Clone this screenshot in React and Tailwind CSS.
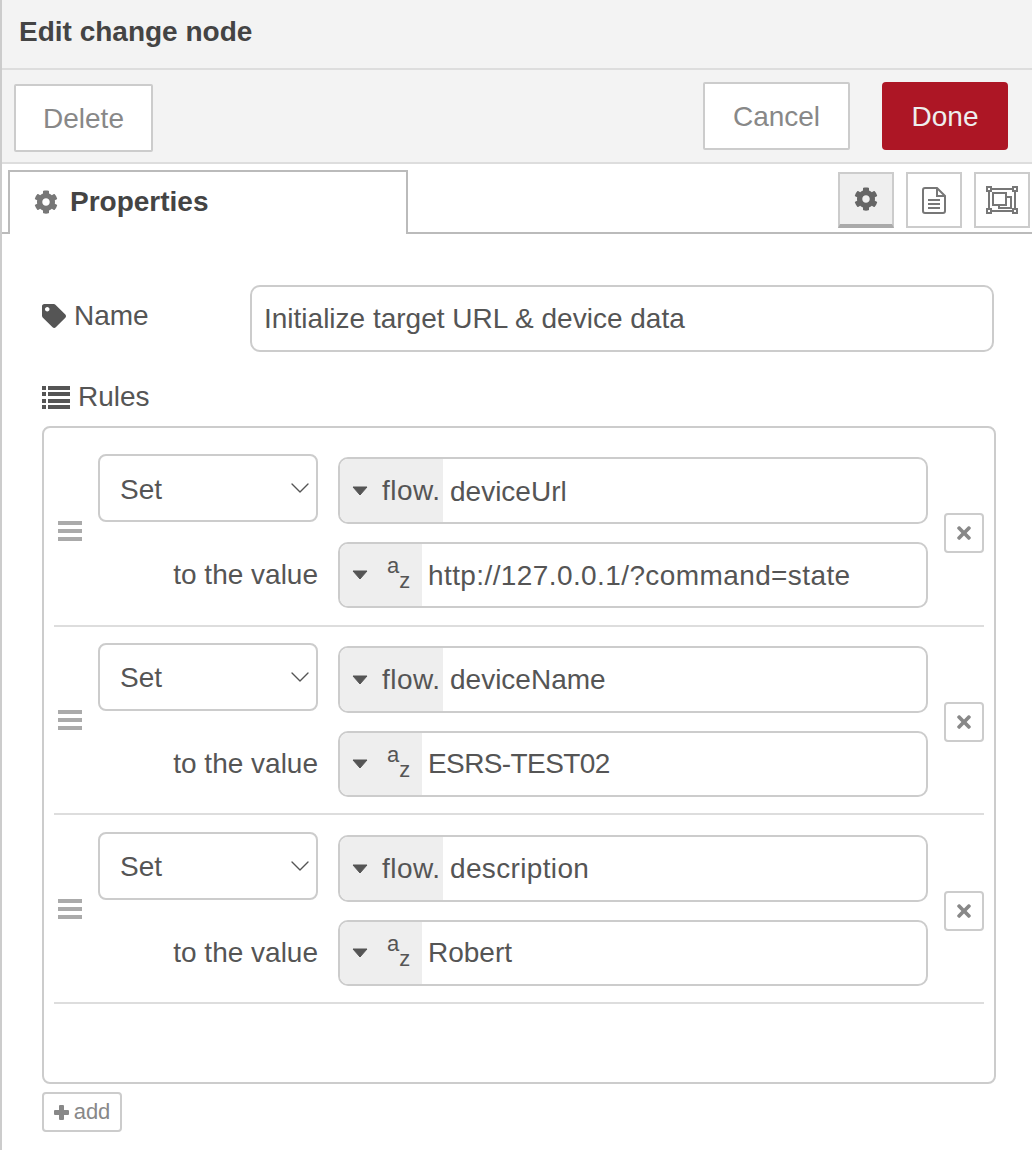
import React from 'react';
import { ChevronDown } from 'lucide-react';
import { FaCog, FaTag, FaTimes } from 'react-icons/fa';

const rules = [
  { target: 'deviceUrl', value: 'http://127.0.0.1/?command=state', pad: 'pt-[16px]', h: 'h-[189px]', setCls: 'pt-[3px]', targetCls: 'pt-[2px]', valueCls: 'pt-[2px] tracking-[0.4px]' },
  { target: 'deviceName', value: 'ESRS-TEST02', pad: 'pt-[16px]', h: 'h-[188px]', setCls: 'pt-[1px]', targetCls: '', valueCls: 'tracking-[-0.6px]' },
  { target: 'description', value: 'Robert', pad: 'pt-[17px]', h: 'h-[189px]', setCls: 'pt-[1px]', targetCls: 'tracking-[0.35px]', valueCls: '' },
];

function Caret() {
  return (
    <svg width="16" height="10" viewBox="0 0 16 10" className="shrink-0">
      <path d="M1 1h14L8 9z" fill="#555" stroke="#555" strokeLinejoin="round" />
    </svg>
  );
}

function ListIcon() {
  return (
    <svg width="28" height="23" viewBox="0 0 28 23" fill="#555" className="shrink-0">
      <rect x="0" y="0" width="4" height="4" />
      <rect x="6" y="0" width="22" height="4" />
      <rect x="0" y="6" width="4" height="4" />
      <rect x="6" y="6" width="22" height="4" />
      <rect x="0" y="13" width="4" height="4" />
      <rect x="6" y="13" width="22" height="4" />
      <rect x="0" y="19" width="4" height="4" />
      <rect x="6" y="19" width="22" height="4" />
    </svg>
  );
}

function DocIcon() {
  return (
    <svg width="24" height="27" viewBox="0 0 24 27" fill="none" stroke="#777" strokeWidth="2">
      <path d="M3 1h12l8 8v15a2 2 0 0 1-2 2H3a2 2 0 0 1-2-2V3a2 2 0 0 1 2-2z" />
      <path d="M15 1v8h8" />
      <path d="M6 13h12M6 17h12M6 21h12" />
    </svg>
  );
}

function FrameIcon() {
  return (
    <svg width="32" height="28" viewBox="0 0 32 28" fill="none" stroke="#777" strokeWidth="2">
      <path d="M3 3h26M3 25h26M3 3v22M29 3v22" />
      <rect x="1" y="1" width="4" height="4" fill="#fff" />
      <rect x="27" y="1" width="4" height="4" fill="#fff" />
      <rect x="1" y="23" width="4" height="4" fill="#fff" />
      <rect x="27" y="23" width="4" height="4" fill="#fff" />
      <path d="M20 11h5v11H13v-3" />
      <rect x="7" y="7" width="13" height="12" />
    </svg>
  );
}

function PlusIcon() {
  return (
    <svg width="15" height="15" viewBox="0 0 15 15" fill="#888" className="shrink-0">
      <rect x="5" y="0" width="5" height="15" rx="1" />
      <rect x="0" y="5" width="15" height="5" rx="1" />
    </svg>
  );
}

function RuleRow({ rule }) {
  return (
    <div className={`flex border-b-2 border-[#ddd] ${rule.h} ${rule.pad}`}>
      <div className="w-[44px] shrink-0 self-center -mt-[17px] pl-[4px]">
        <div className="flex flex-col gap-[4px] w-[24px]">
          <div className="h-[4px] bg-[#aaa]"></div>
          <div className="h-[4px] bg-[#aaa]"></div>
          <div className="h-[4px] bg-[#aaa]"></div>
        </div>
      </div>
      <div className="w-[830px] shrink-0">
        <div className="flex items-start gap-[20px]">
          <div className="w-[220px] h-[68px] flex items-center justify-between pl-[20px] border-2 border-[#ccc] rounded-[8px]">
            <span className={rule.setCls}>Set</span>
            <ChevronDown size={32} strokeWidth={1} color="#555" />
          </div>
          <div className="mt-[3px] w-[590px] h-[67px] flex border-2 border-[#ccc] rounded-[10px] overflow-hidden">
            <div className="w-[103px] bg-[#eee] flex items-center pl-[12px] gap-[14px]">
              <Caret />
              <span className="tracking-[0.5px]">flow.</span>
            </div>
            <div className={`flex items-center pl-[7px] ${rule.targetCls}`}>{rule.target}</div>
          </div>
        </div>
        <div className="flex items-center gap-[20px] mt-[18px]">
          <div className="w-[220px] text-right">to the value</div>
          <div className="w-[590px] h-[66px] flex border-2 border-[#ccc] rounded-[10px] overflow-hidden">
            <div className="w-[82px] bg-[#eee] flex items-center pl-[12px]">
              <Caret />
              <div className="flex items-center text-[22px] leading-[14px] ml-[19px]">
                <span className="-translate-y-[9px]">a</span>
                <span className="translate-y-[6px]">z</span>
              </div>
            </div>
            <div className={`flex items-center pl-[6px] ${rule.valueCls}`}>{rule.value}</div>
          </div>
        </div>
      </div>
      <div className="flex-1 self-center flex justify-end -mt-[13px]">
        <div className="w-[40px] h-[40px] border-2 border-[#ccc] rounded-[4px] flex items-center justify-center">
          <FaTimes size={20} color="#888" />
        </div>
      </div>
    </div>
  );
}

export default function App() {
  return (
    <div className="w-[1032px] h-[1150px] overflow-hidden border-l-2 border-[#ccc] bg-white text-[#555] text-[28px] leading-[32px] [font-family:'Liberation_Sans',Arial,sans-serif]">
      <div className="h-[70px] bg-[#f3f3f3] border-b-2 border-[#ddd] flex items-center pl-[17px] pb-[4px] font-bold text-[#444]">
        Edit change node
      </div>
      <div className="h-[94px] bg-[#f3f3f3] border-b-2 border-[#ddd] flex items-start justify-between pl-[12px] pr-[24px] pt-[12px]">
        <div className="mt-[2px] w-[139px] h-[68px] pt-[2px] bg-white border-2 border-[#ccc] rounded-[2px] flex items-center justify-center text-[#888]">Delete</div>
        <div className="flex gap-[32px]">
          <div className="w-[147px] h-[68px] pt-[2px] bg-white border-2 border-[#ccc] rounded-[2px] flex items-center justify-center text-[#888]">Cancel</div>
          <div className="w-[126px] h-[68px] pt-[2px] bg-[#ad1625] rounded-[4px] flex items-center justify-center text-[#eee]">Done</div>
        </div>
      </div>

      <div className="h-[70px] border-b-2 border-[#bbb] flex items-start pl-[6px] pr-[2px]">
        <div className="mt-[6px] w-[400px] h-[64px] bg-white border-2 border-b-0 border-[#bbb] flex items-center pl-[24px] pb-[2px] gap-[12px] font-bold text-[#444]">
          <FaCog size={24} color="#777" />
          <span>Properties</span>
        </div>
        <div className="ml-auto mt-[8px] flex gap-[12px]">
          <div className="w-[56px] h-[56px] bg-[#efefef] border-2 border-b-[4px] border-[#ccc] border-b-[#aaa] flex items-center justify-center">
            <FaCog size={24} color="#666" />
          </div>
          <div className="w-[56px] h-[56px] border-2 border-[#ccc] flex items-center justify-center">
            <DocIcon />
          </div>
          <div className="w-[56px] h-[56px] border-2 border-[#ccc] flex items-center justify-center">
            <FrameIcon />
          </div>
        </div>
      </div>

      <div className="pl-[40px] pt-[51px]">
        <div className="flex items-center">
          <div className="w-[208px] flex items-center gap-[8px] -mt-[6px]">
            <FaTag size={24} color="#555" />
            <span>Name</span>
          </div>
          <div className="w-[744px] h-[67px] border-2 border-[#ccc] rounded-[10px] flex items-center pl-[12px]">
            Initialize target URL &amp; device data
          </div>
        </div>
        <div className="flex items-center gap-[8px] mt-[29px]">
          <ListIcon />
          <span>Rules</span>
        </div>
        <div className="mt-[13px] w-[954px] h-[658px] border-2 border-[#ccc] rounded-[8px] px-[10px] pt-[10px]">
          {rules.map(r => <RuleRow key={r.target} rule={r} />)}
        </div>
        <div className="mt-[8px] w-[80px] h-[40px] border-2 border-[#ccc] rounded-[4px] flex items-center justify-center gap-[5px] text-[22px] text-[#888]">
          <PlusIcon />
          <span>add</span>
        </div>
      </div>
    </div>
  );
}
